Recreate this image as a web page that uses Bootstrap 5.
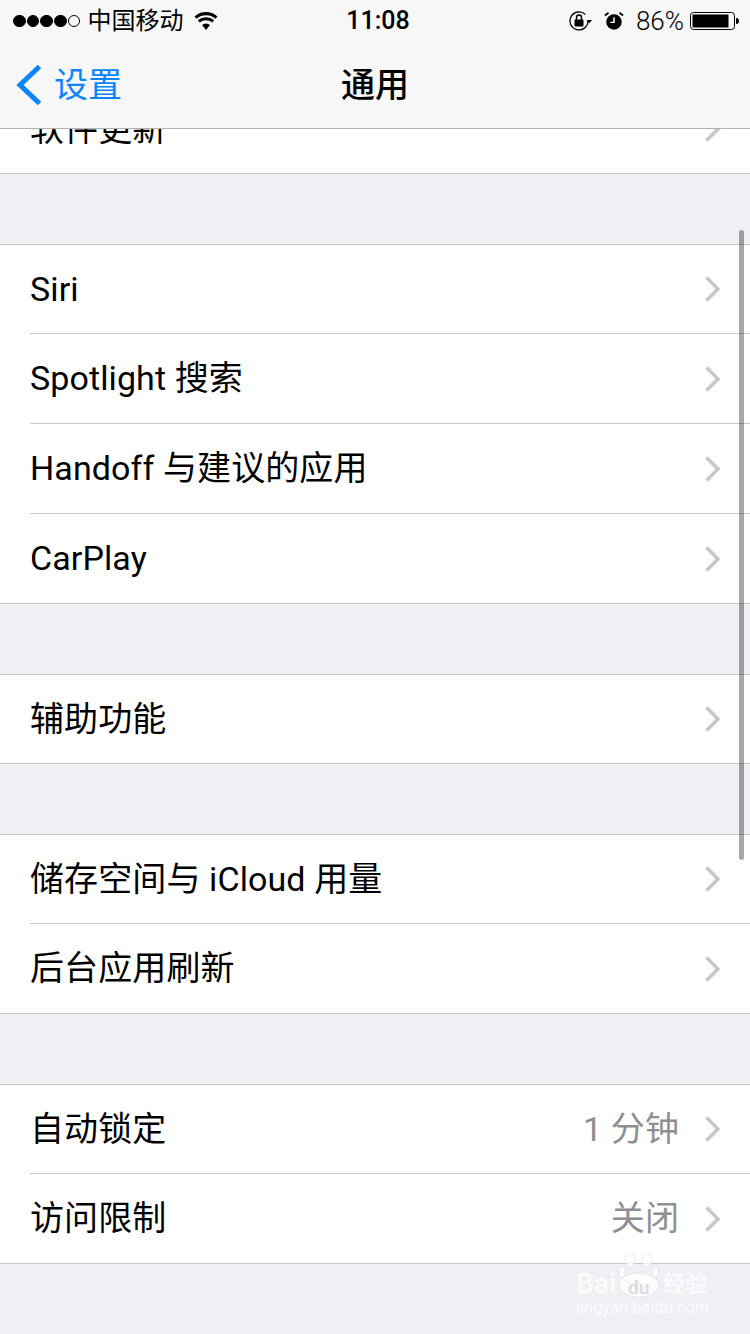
<!DOCTYPE html>
<html lang="zh">
<head>
  <meta charset="UTF-8">
  <title>通用</title>
  <meta name="viewport" content="width=device-width, initial-scale=1">
  <link href="https://cdn.jsdelivr.net/npm/bootstrap@5.3.3/dist/css/bootstrap.min.css" rel="stylesheet">
  <style>
    body {
      width: 750px;
      height: 1334px;
      overflow: hidden;
      background-color: #efeff4;
      color: #000;
      font-family: Roboto, "Noto Sans CJK SC", sans-serif;
    }
    .top-bar {
      height: 129px;
      background-color: #f7f7f8;
      border-bottom: 1px solid #b2b2b2;
    }
    .status-row {
      height: 42px;
      padding: 0 11px 0 13px;
      font-size: 24px;
      line-height: 42px;
    }
    .signal-dot {
      width: 12.500px;
      height: 12.500px;
      border-radius: 50%;
      background: #000;
      border: 1px solid #000;
      margin-right: 1.200px;
    }
    .signal-dot.off {
      background: transparent;
    }
    .carrier {
      margin-left: 6px;
    }
    .wifi-icon {
      margin-left: 11px;
    }
    .status-time {
      left: 6px;
      right: 0;
      top: 0;
      text-align: center;
      font-size: 25px;
      font-weight: 500;
    }
    .alarm-icon {
      margin-left: 12px;
    }
    .battery-text {
      margin-left: 12px;
      font-size: 26px;
      font-weight: 300;
    }
    .battery-icon {
      margin-left: 6px;
    }
    .nav-row {
      height: 86px;
      font-size: 34px;
    }
    .nav-back {
      left: 15px;
      top: 20px;
      color: #0a84ff;
      line-height: 46px;
    }
    .nav-back span {
      margin-left: 12px;
    }
    .nav-title {
      font-weight: 500;
      line-height: 86px;
    }
    .group {
      background: #fff;
      border-top: 1px solid #c8c7cc;
      border-bottom: 1px solid #c8c7cc;
      margin-bottom: 70px;
      list-style: none;
      padding: 0;
    }
    .group.cut {
      border-top: 0;
      height: 45px;
      overflow: hidden;
    }
    .group.cut .cell {
      margin-top: -44px;
    }
    .cell {
      height: 88px;
      padding-left: 30px;
      font-size: 34px;
      letter-spacing: .1px;
    }
    .cell + .cell {
      height: 90px;
    }
    .cell-inner {
      height: 100%;
      padding-right: 28px;
    }
    .cell + .cell .cell-inner {
      border-top: 1px solid #c8c7cc;
    }
    .cell-value {
      color: #8e8e93;
      margin-right: 25px;
    }
    .scroll-thumb {
      right: 6px;
      top: 230px;
      width: 5px;
      height: 630px;
      border-radius: 3px;
      background: rgba(0, 0, 0, .34);
    }
    .watermark {
      left: 576px;
      top: 1252px;
      width: 134px;
      color: rgba(255, 255, 255, .72);
      line-height: 1;
    }
    .wm-logo {
      font-size: 28px;
      font-weight: 700;
      height: 46px;
    }
    .wm-logo svg {
      flex: none;
      margin: 0 3px 0 2px;
    }
    .wm-han {
      font-size: 22px;
      margin-bottom: 3px;
    }
    .wm-du {
      left: 52px;
      top: 26px;
      font-size: 19px;
      color: #dcdce3;
    }
    .wm-url {
      font-size: 16px;
      letter-spacing: .2px;
      margin-top: 2px;
    }
  </style>
</head>
<body class="position-relative">
  <div class="top-bar position-relative">
    <div class="status-row d-flex align-items-center justify-content-between position-relative">
      <div class="d-flex align-items-center">
        <span class="signal-dot"></span><span class="signal-dot"></span><span class="signal-dot"></span><span class="signal-dot"></span><span class="signal-dot off"></span>
        <span class="carrier">中国移动</span>
        <svg class="wifi-icon" width="24" height="18" viewBox="0 0 24 18"><path d="M12 18l-4-5a6 6 0 0 1 8 0zM5.800 10.500l-2-2.300a12.500 12.500 0 0 1 16.400 0l-2 2.300a9.500 9.500 0 0 0-12.400 0zM2.600 6.800L.5 4.400a17.500 17.500 0 0 1 23 0l-2.100 2.400a14.500 14.500 0 0 0-18.800 0z"/></svg>
      </div>
      <div class="status-time position-absolute">11:08</div>
      <div class="d-flex align-items-center">
        <svg width="24" height="22" viewBox="0 0 24 22"><path d="M20 11a9 9 0 1 1-2.600-6.400" fill="none" stroke="#000" stroke-width="1.300"/><path d="M18.500 10h5.500l-2.700 3.200z"/><rect x="6.500" y="9.500" width="9" height="7" rx="1"/><path d="M8.500 10V7.500a2.500 2.500 0 0 1 5 0V10" fill="none" stroke="#000" stroke-width="1.500"/></svg>
        <svg class="alarm-icon" width="20" height="20" viewBox="0 0 22 22"><circle cx="11" cy="12" r="8.500"/><path d="M11 7v5.500H7" fill="none" stroke="#fff" stroke-width="1.600"/><path d="M1 5l4-3M21 5l-4-3" stroke="#000" stroke-width="2"/></svg>
        <span class="battery-text">86%</span>
        <svg class="battery-icon" width="49" height="20" viewBox="0 0 49 20"><rect x=".5" y="1.500" width="44" height="17" rx="3" fill="none" stroke="#000"/><rect x="2.500" y="3.500" width="36" height="13"/><path d="M46 7c2 0 3 1 3 3s-1 3-3 3z"/></svg>
      </div>
    </div>
    <div class="nav-row position-relative text-center">
      <div class="nav-back position-absolute d-flex align-items-center">
        <svg width="27" height="42" viewBox="0 0 27 42"><path d="M24.500 2.500L5 21 24.500 39.500" fill="none" stroke="#0a84ff" stroke-width="5"/></svg>
        <span>设置</span>
      </div>
      <div class="nav-title">通用</div>
    </div>
  </div>

  <ul class="group cut">
    <li class="cell"><div class="cell-inner d-flex align-items-center justify-content-between"><span>软件更新</span><svg width="18" height="28" viewBox="0 0 18 28"><path d="M2.500 2.500L14 14 2.500 25.500" fill="none" stroke="#c7c7cc" stroke-width="3.600"/></svg></div></li>
  </ul>

  <ul class="group">
    <li class="cell"><div class="cell-inner d-flex align-items-center justify-content-between"><span>Siri</span><svg width="18" height="28" viewBox="0 0 18 28"><path d="M2.500 2.500L14 14 2.500 25.500" fill="none" stroke="#c7c7cc" stroke-width="3.600"/></svg></div></li>
    <li class="cell"><div class="cell-inner d-flex align-items-center justify-content-between"><span>Spotlight 搜索</span><svg width="18" height="28" viewBox="0 0 18 28"><path d="M2.500 2.500L14 14 2.500 25.500" fill="none" stroke="#c7c7cc" stroke-width="3.600"/></svg></div></li>
    <li class="cell"><div class="cell-inner d-flex align-items-center justify-content-between"><span>Handoff 与建议的应用</span><svg width="18" height="28" viewBox="0 0 18 28"><path d="M2.500 2.500L14 14 2.500 25.500" fill="none" stroke="#c7c7cc" stroke-width="3.600"/></svg></div></li>
    <li class="cell"><div class="cell-inner d-flex align-items-center justify-content-between"><span>CarPlay</span><svg width="18" height="28" viewBox="0 0 18 28"><path d="M2.500 2.500L14 14 2.500 25.500" fill="none" stroke="#c7c7cc" stroke-width="3.600"/></svg></div></li>
  </ul>

  <ul class="group">
    <li class="cell"><div class="cell-inner d-flex align-items-center justify-content-between"><span>辅助功能</span><svg width="18" height="28" viewBox="0 0 18 28"><path d="M2.500 2.500L14 14 2.500 25.500" fill="none" stroke="#c7c7cc" stroke-width="3.600"/></svg></div></li>
  </ul>

  <ul class="group">
    <li class="cell"><div class="cell-inner d-flex align-items-center justify-content-between"><span>储存空间与 iCloud 用量</span><svg width="18" height="28" viewBox="0 0 18 28"><path d="M2.500 2.500L14 14 2.500 25.500" fill="none" stroke="#c7c7cc" stroke-width="3.600"/></svg></div></li>
    <li class="cell"><div class="cell-inner d-flex align-items-center justify-content-between"><span>后台应用刷新</span><svg width="18" height="28" viewBox="0 0 18 28"><path d="M2.500 2.500L14 14 2.500 25.500" fill="none" stroke="#c7c7cc" stroke-width="3.600"/></svg></div></li>
  </ul>

  <ul class="group">
    <li class="cell"><div class="cell-inner d-flex align-items-center"><span class="me-auto">自动锁定</span><span class="cell-value">1 分钟</span><svg width="18" height="28" viewBox="0 0 18 28"><path d="M2.500 2.500L14 14 2.500 25.500" fill="none" stroke="#c7c7cc" stroke-width="3.600"/></svg></div></li>
    <li class="cell"><div class="cell-inner d-flex align-items-center"><span class="me-auto">访问限制</span><span class="cell-value">关闭</span><svg width="18" height="28" viewBox="0 0 18 28"><path d="M2.500 2.500L14 14 2.500 25.500" fill="none" stroke="#c7c7cc" stroke-width="3.600"/></svg></div></li>
  </ul>

  <div class="scroll-thumb position-absolute"></div>
  <div class="watermark position-absolute">
    <div class="wm-logo position-relative d-flex align-items-end">
      <span>Bai</span>
      <svg width="42" height="46" viewBox="0 0 42 46" fill="currentColor" stroke="#000" stroke-opacity=".07"><ellipse cx="12" cy="8" rx="5" ry="7"/><ellipse cx="29" cy="8" rx="5" ry="7"/><ellipse cx="4" cy="20" rx="3.500" ry="5.500"/><ellipse cx="37" cy="20" rx="3.500" ry="5.500"/><ellipse cx="21" cy="33" rx="20" ry="12"/></svg>
      <span class="wm-du position-absolute">du</span>
      <span class="wm-han">经验</span>
    </div>
    <div class="wm-url">jingyan.baidu.com</div>
  </div>
</body>
</html>
